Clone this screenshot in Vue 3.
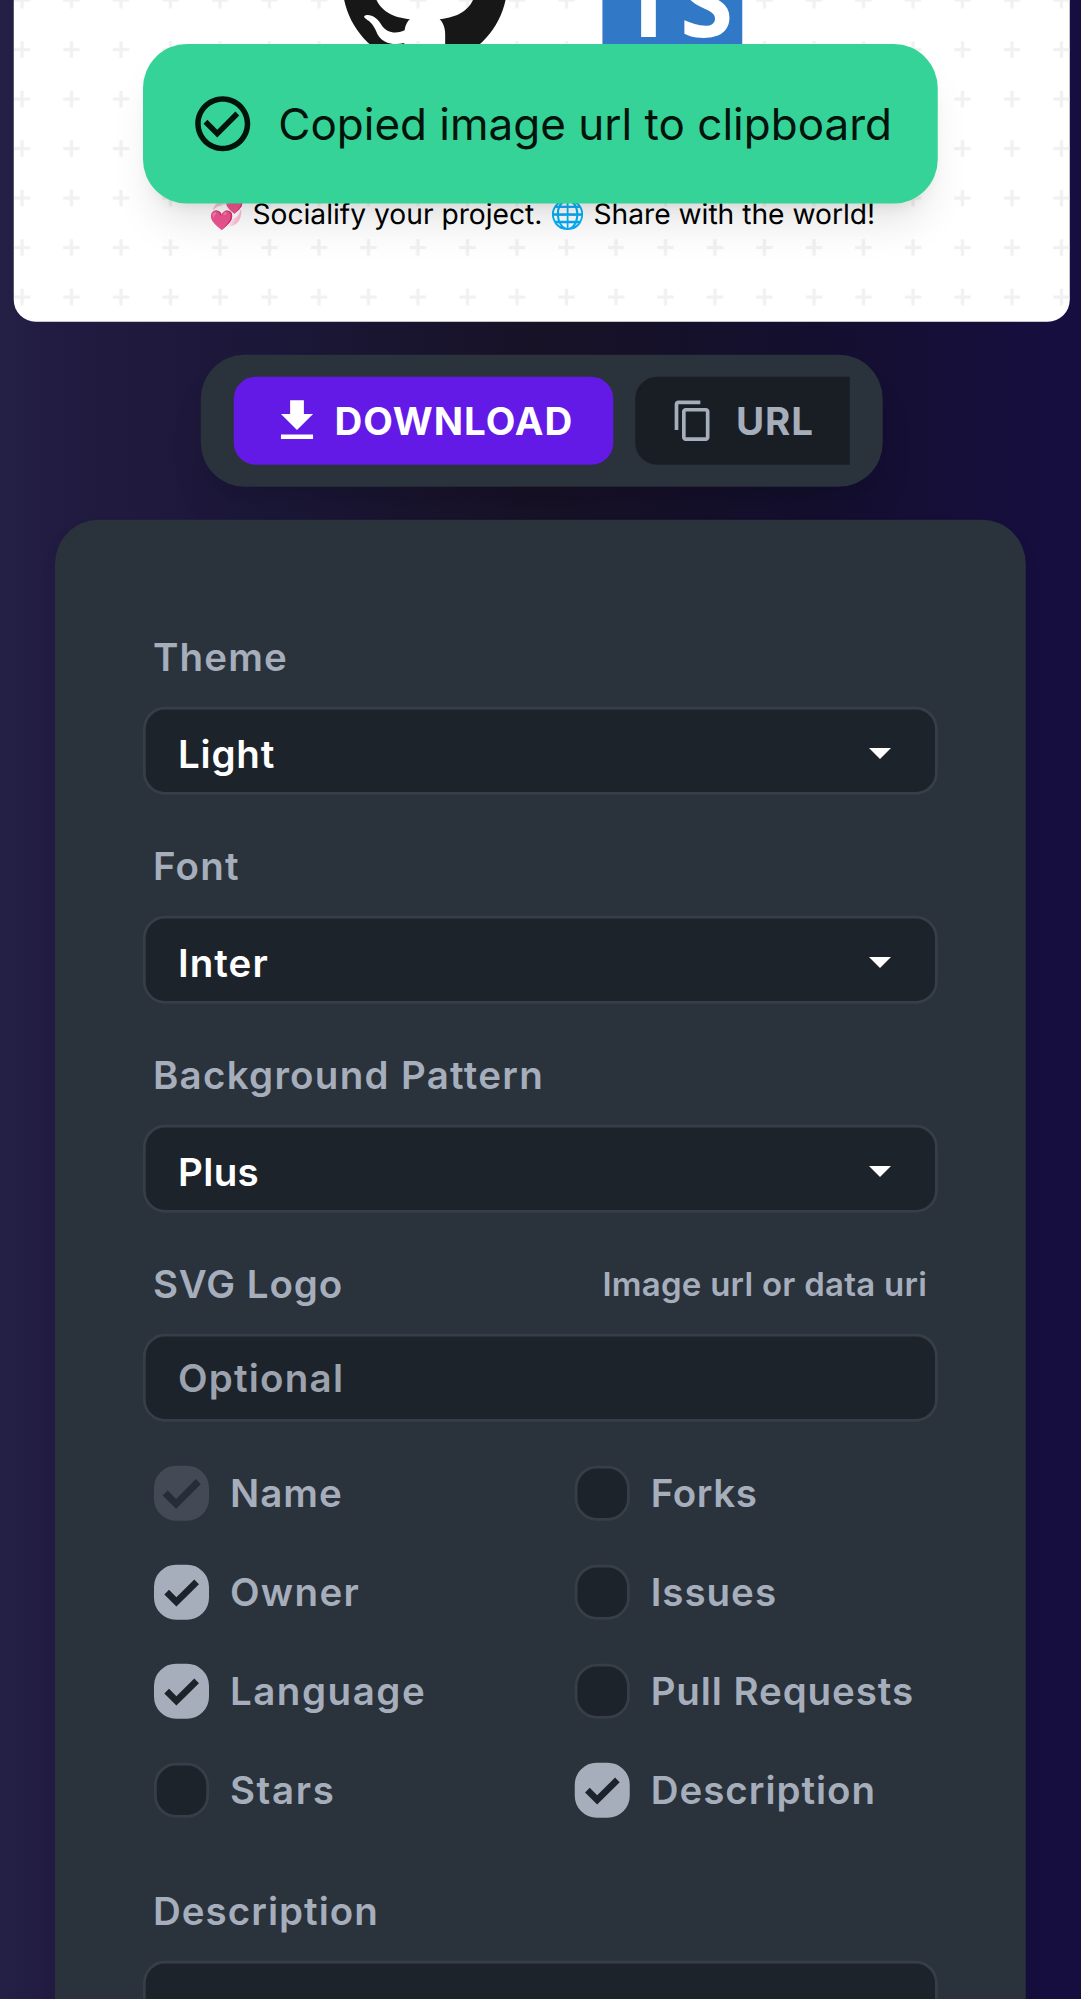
<script setup>
// `spacing` is the tracking of each caption, in px
const selects = [
  { label: 'Theme', spacing: 0.43, value: 'Light', valueSpacing: 0.3 },
  { label: 'Font', spacing: 0.45, value: 'Inter', valueSpacing: 0.4 },
  { label: 'Background Pattern', spacing: 0.47, value: 'Plus', valueSpacing: 0.15 },
]

const options = [
  { label: 'Name', spacing: 0.38, checked: true, disabled: true },
  { label: 'Forks', spacing: 0.22, checked: false },
  { label: 'Owner', spacing: 0.5, checked: true },
  { label: 'Issues', spacing: 0.36, checked: false },
  { label: 'Language', spacing: 0.56, checked: true },
  { label: 'Pull Requests', spacing: 0.33, checked: false },
  { label: 'Stars', spacing: 0.6, checked: false },
  { label: 'Description', spacing: 0.36, checked: true },
]

const tracking = (px) => ({ letterSpacing: `${px}px` })
</script>

<template>
  <div class="viewport">
    <div class="page">
      <section class="preview">
        <svg class="pattern" width="384" height="192">
          <defs>
            <pattern id="plus" width="18" height="18" patternUnits="userSpaceOnUse">
              <path d="M2.4 0h1.2v2.4H6v1.2H3.6V6H2.4V3.6H0V2.4h2.4z" fill="#f1f1f1" />
            </pattern>
          </defs>
          <rect width="384" height="192" fill="url(#plus)" />
        </svg>
        <div class="logos">
          <svg class="github" viewBox="0.2 0 24 24" fill="#181717">
            <path d="M12 .297c-6.63 0-12 5.373-12 12 0 5.303 3.438 9.8 8.205 11.385.6.113.82-.258.82-.577 0-.285-.01-1.04-.015-2.04-3.338.724-4.042-1.61-4.042-1.61C4.422 18.07 3.633 17.7 3.633 17.7c-1.087-.744.084-.729.084-.729 1.205.084 1.838 1.236 1.838 1.236 1.07 1.835 2.809 1.305 3.495.998.108-.776.417-1.305.76-1.605-2.665-.3-5.466-1.332-5.466-5.93 0-1.31.465-2.38 1.235-3.22-.135-.303-.54-1.523.105-3.176 0 0 1.005-.322 3.3 1.23.96-.267 1.98-.399 3-.405 1.02.006 2.04.138 3 .405 2.28-1.552 3.285-1.23 3.285-1.23.645 1.653.24 2.873.12 3.176.765.84 1.23 1.91 1.23 3.22 0 4.61-2.805 5.625-5.475 5.92.42.36.81 1.096.81 2.22 0 1.606-.015 2.896-.015 3.286 0 .315.21.69.825.57C20.565 22.092 24 17.592 24 12.297c0-6.627-5.373-12-12-12" />
          </svg>
          <svg class="typescript" viewBox="0 0 24 24">
            <rect width="24" height="24" fill="#3178c6" />
            <text class="ts" x="3.14 13.3" y="21.45">TS</text>
          </svg>
        </div>
        <p class="tagline">💞 Socialify your project. 🌐 Share with the world!</p>
      </section>

      <div class="toolbar">
        <button class="btn primary">
          <svg width="20" height="20" viewBox="0 0 24 24" fill="currentColor">
            <path d="M19 9h-4V3H9v6H5l7 7 7-7zM5 18v2h14v-2H5z" />
          </svg>
          DOWNLOAD
        </button>
        <button class="btn url">
          <svg width="16" height="16" viewBox="0 0 24 24" fill="currentColor">
            <path d="M16 1H4c-1.1 0-2 .9-2 2v14h2V3h12V1zm3 4H8c-1.1 0-2 .9-2 2v14c0 1.1.9 2 2 2h11c1.1 0 2-.9 2-2V7c0-1.1-.9-2-2-2zm0 16H8V7h11v14z" />
          </svg>
          URL
        </button>
      </div>

      <section class="panel">
        <div v-for="s in selects" :key="s.label" class="control">
          <div class="label"><span :style="tracking(s.spacing)">{{ s.label }}</span></div>
          <div class="field select">
            <span :style="tracking(s.valueSpacing)">{{ s.value }}</span>
            <svg width="8" height="4" viewBox="0 0 8 4"><path d="M0 0h8L4 4z" fill="#fff" /></svg>
          </div>
        </div>
        <div class="control">
          <div class="label">
            <span :style="tracking(0.34)">SVG Logo</span>
            <span class="alt">Image url or data uri</span>
          </div>
          <div class="field placeholder">Optional</div>
        </div>

        <div class="options">
          <div v-for="o in options" :key="o.label" class="option">
            <span class="box" :class="{ checked: o.checked, disabled: o.disabled }">
              <svg v-if="o.disabled" viewBox="0 0 20 20">
                <path d="M3.15 10.85 5 9l3.05 3.05 7.15-7.2L17 6.7l-8.95 8.9z" fill="#252d36" />
              </svg>
              <svg v-else-if="o.checked" viewBox="0 0 20 20">
                <path d="M3.75 10.8 5.45 9.1l2.7 2.7 6.5-6.4 1.7 1.7-8.2 8.1z" fill="#1d232a" />
              </svg>
            </span>
            <span :style="tracking(o.spacing)">{{ o.label }}</span>
          </div>
        </div>

        <div class="control">
          <div class="label"><span :style="tracking(0.38)">Description</span></div>
          <div class="field area"></div>
        </div>
      </section>

      <div class="toast">
        <svg width="24" height="24" viewBox="0 0 24 24" fill="currentColor">
          <path d="M16.59 7.58 10 14.17l-3.59-3.58L5 12l5 5 8-8zM12 2C6.48 2 2 6.48 2 12s4.48 10 10 10 10-4.48 10-10S17.52 2 12 2zm0 18c-4.42 0-8-3.58-8-8s3.58-8 8-8 8 3.58 8 8-3.58 8-8 8z" />
        </svg>
        <span>Copied image url to clipboard</span>
      </div>
    </div>
  </div>
</template>

<style>
body {
  margin: 0;
  background: #171226;
}
</style>

<style scoped>
.viewport {
  width: 1081px;
  height: 1999px;
  overflow: hidden;
}
.page {
  position: relative;
  display: flex;
  flex-direction: column;
  align-items: center;
  width: 393px;
  height: 727px;
  padding-right: 0.1px;
  overflow: hidden;
  transform: scale(2.75);
  transform-origin: 0 0;
  background: linear-gradient(90deg, #231f45 0%, #221b41 6%, #1b1738 25%, #171226 50%, #140f2e 75%, #160f3d 94%, #160e40 100%);
  color: #a6adbb;
  font: 600 14px/20px Inter, sans-serif;
}
.page * {
  box-sizing: border-box;
}
.page svg {
  display: block;
  flex: none;
}
.preview {
  position: relative;
  flex: none;
  width: 384px;
  height: 192px;
  margin-top: -75px;
  margin-left: 1px;
  border-radius: 8px;
  overflow: hidden;
  background: #fff;
}
.pattern {
  position: absolute;
  inset: 0;
}
.logos {
  position: relative;
  display: flex;
  align-items: center;
  gap: 34.7px;
  height: 60px;
  margin: 38px 0 0 119.7px;
}
.github {
  width: 60px;
  height: 60px;
}
.typescript {
  width: 51px;
  height: 51px;
}
.ts {
  fill: #fff;
  font: 700 16.54px 'Open Sans', sans-serif;
}
.tagline {
  margin: 45px 0 0;
  color: #000;
  font-size: 10.25px;
  font-weight: 400;
  line-height: 20px;
  text-align: center;
  white-space: nowrap;
  text-rendering: geometricPrecision;
  transform: translate(0.2px, 0.4px);
}
.toolbar {
  display: flex;
  flex: none;
  gap: 8px;
  width: 248px;
  height: 48px;
  margin: 12px 0;
  margin-left: 1px;
  padding: 8px 12px;
  border-radius: 16px;
  background: #2a323c;
  box-shadow: 0 10px 15px -3px #0000001a, 0 4px 6px -4px #0000001a;
}
.btn {
  display: flex;
  align-items: center;
  height: 32px;
  padding: 0 12px;
  border: 1px solid transparent;
  font: 700 14px/14px Inter, sans-serif;
  letter-spacing: 0.35px;
  white-space: nowrap;
}
.primary {
  gap: 3.6px;
  width: 138px;
  border-color: #641ae6;
  border-radius: 8px;
  background: #641ae6;
  color: #fff;
}
.url {
  gap: 7.6px;
  width: 78px;
  border-color: #191e24;
  border-radius: 8px 0 0 8px;
  background: #191e24;
  color: #a6adbb;
}
.panel {
  flex: none;
  width: 353px;
  height: 620px;
  padding: 32px;
  border-radius: 16px;
  background: #2a323c;
  box-shadow: 0 4px 8px -2px #0000001a;
}
.control {
  margin-bottom: 8px;
}
.label {
  display: flex;
  align-items: center;
  justify-content: space-between;
  height: 36px;
  padding: 8px 4px 8px 3.6px;
}
.alt {
  font-size: 12px;
  line-height: 16px;
  letter-spacing: 0.09px;
  transform: translate(0.1px, 0.35px);
}
.field {
  display: flex;
  align-items: center;
  height: 32px;
  padding: 0 11.7px;
  border: 1px solid #373e48;
  border-radius: 8px;
  background: #1d232a;
}
.select {
  justify-content: space-between;
  padding: 2px 16px 0 11.7px;
  color: #fff;
}
.select span {
  transform: translateY(0.35px);
}
.placeholder {
  color: #9ca3af;
  letter-spacing: 0.45px;
}
.area {
  height: 96px;
}
.options {
  display: grid;
  grid-template-columns: 1fr 1fr;
  column-gap: 17px;
  margin-bottom: 8px;
}
.option {
  display: flex;
  align-items: center;
  gap: 7.6px;
  height: 36px;
  padding: 8px 4px;
  white-space: nowrap;
}
.box {
  flex: none;
  width: 20px;
  height: 20px;
  border: 1px solid #373e48;
  border-radius: 8px;
  background: #1d232a;
}
.box svg {
  width: 20px;
  height: 20px;
  margin: -1px;
}
.box.checked {
  border-color: #a6adbb;
  background: #a6adbb;
}
.box.disabled {
  border-color: #434955;
  background: #434955;
}
.toast {
  position: absolute;
  top: 16px;
  left: 52px;
  display: flex;
  align-items: center;
  gap: 8.2px;
  width: 289px;
  height: 58px;
  padding: 0 17px;
  border-radius: 16px;
  background: #36d399;
  color: #01140b;
  box-shadow: 0 10px 15px -3px #0000001a, 0 4px 6px -4px #0000001a;
  font-size: 16px;
  font-weight: 400;
  line-height: 24px;
  white-space: nowrap;
}
</style>
